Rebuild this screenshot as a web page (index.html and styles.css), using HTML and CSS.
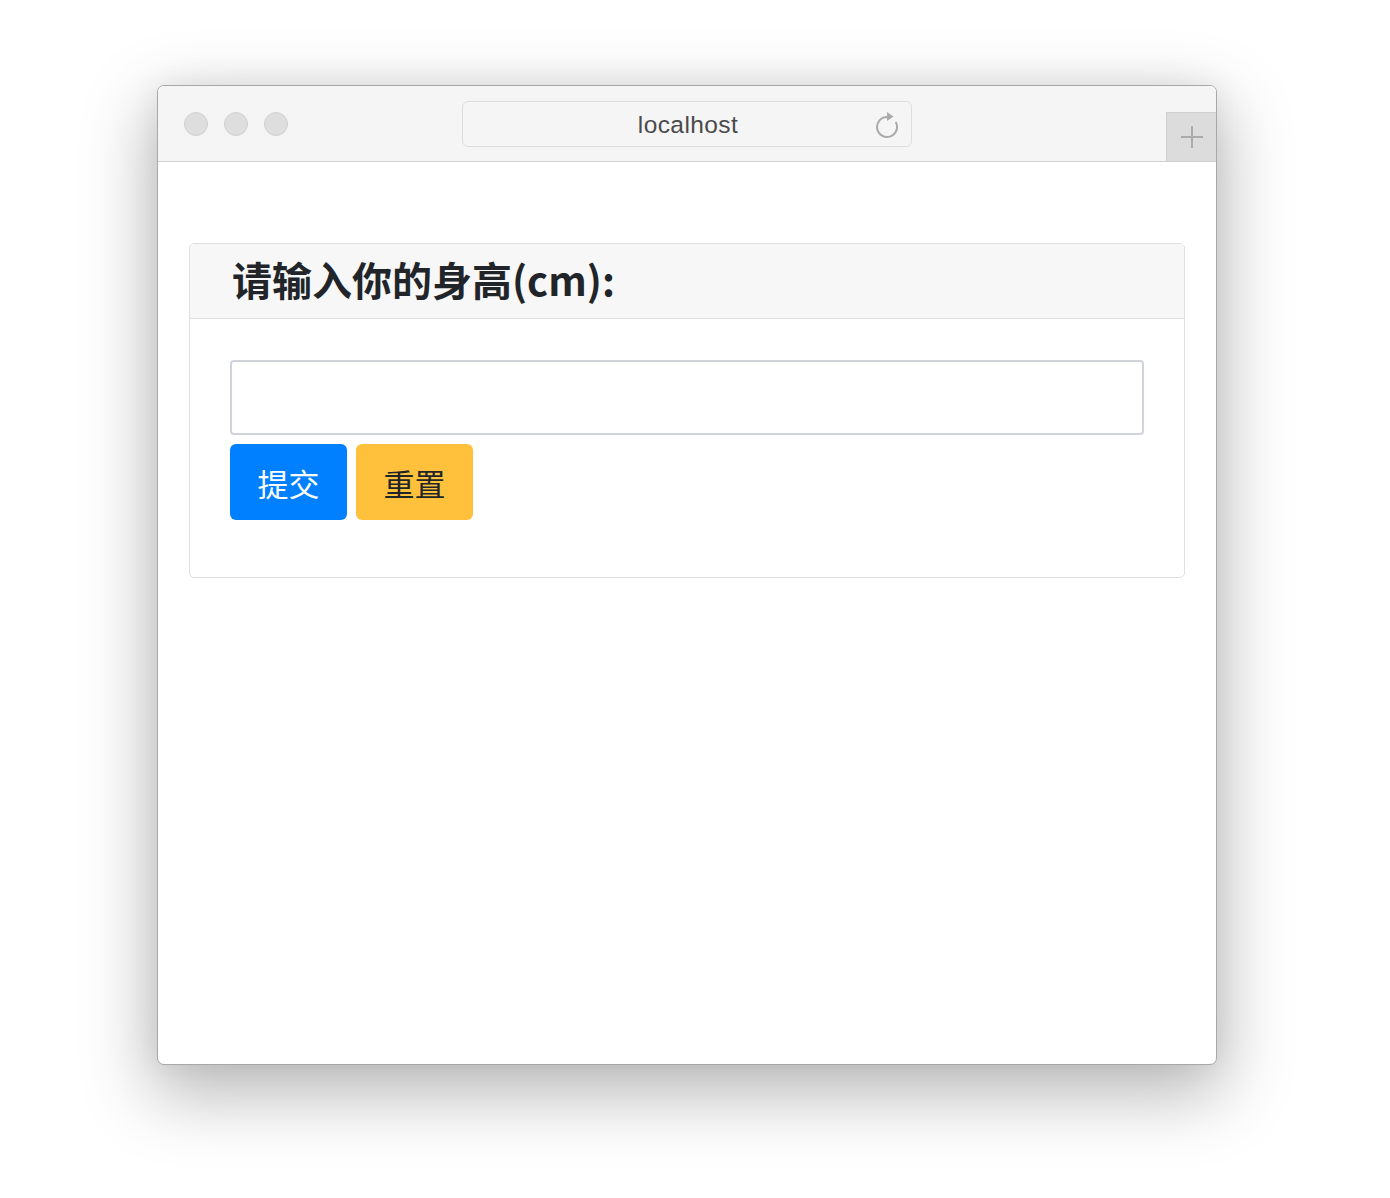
FILE: index.html
```html
<!DOCTYPE html>
<html lang="zh-CN">
<head>
<meta charset="utf-8">
<title>localhost</title>
<link rel="stylesheet" href="styles.css">
</head>
<body>
<div class="window">
  <div class="titlebar">
    <div class="lights">
      <span class="light"></span>
      <span class="light"></span>
      <span class="light"></span>
    </div>
    <div class="address">
      <span class="url">localhost</span>
      <svg class="reload" width="26" height="28" viewBox="0 0 26 28" aria-hidden="true">
        <path d="M13 6 A10 10 0 1 0 21.7 11" fill="none" stroke="#aaaaaa" stroke-width="2"/>
        <polygon points="13,1 19.5,5.5 13,10" fill="#aaaaaa"/>
      </svg>
    </div>
    <div class="newtab">
      <svg width="24" height="24" viewBox="0 0 24 24" aria-hidden="true">
        <path d="M12 1 V23 M1 12 H23" stroke="#aaaaaa" stroke-width="2"/>
      </svg>
    </div>
  </div>
  <div class="content">
    <div class="card">
      <div class="card-header">
        <h2 class="card-title">请输入你的身高(cm):</h2>
      </div>
      <div class="card-body">
        <form class="form">
          <input class="input" type="text">
          <div class="actions">
            <button type="button" class="btn btn-primary">提交</button>
            <button type="reset" class="btn btn-warning">重置</button>
          </div>
        </form>
      </div>
    </div>
  </div>
</div>
</body>
</html>
```
FILE: styles.css
```css
html, body {
  margin: 0;
  padding: 0;
  background: #ffffff;
}
body {
  min-height: 1198px;
  box-sizing: border-box;
  padding: 85px 0 0 157px;
  font-family: "Noto Sans CJK SC", "Noto Sans", sans-serif;
  color: #212529;
}
.window {
  width: 1060px;
  height: 980px;
  box-sizing: border-box;
  border: 1px solid #a8a8a8;
  border-radius: 7px;
  overflow: hidden;
  background: #ffffff;
  box-shadow: 0 24px 70px 6px rgba(0, 0, 0, 0.28), 0 0 30px rgba(0, 0, 0, 0.06);
  display: flex;
  flex-direction: column;
}
.titlebar {
  height: 75px;
  background: #f5f5f5;
  border-bottom: 1px solid #cfcfcf;
  display: grid;
  grid-template-columns: 1fr auto 1fr;
  align-items: center;
}
.lights {
  display: flex;
  gap: 16px;
  padding-left: 26px;
}
.light {
  width: 24px;
  height: 24px;
  box-sizing: border-box;
  border-radius: 50%;
  background: #dedede;
  border: 1px solid #d2d2d2;
}
.address {
  width: 450px;
  height: 46px;
  box-sizing: border-box;
  border: 1px solid #dedede;
  border-radius: 6px;
  background: #f5f5f5;
  display: flex;
  align-items: center;
  justify-content: center;
  position: relative;
}
.url {
  font-family: "Liberation Sans", Arial, sans-serif;
  font-size: 24.5px;
  letter-spacing: 0.4px;
  color: #4a4a4a;
  margin-left: 2px;
  margin-top: 3px;
}
.reload {
  position: absolute;
  right: 11px;
  top: 9px;
}
.newtab {
  justify-self: end;
  align-self: end;
  width: 50px;
  height: 49px;
  box-sizing: border-box;
  background: #dcdcdc;
  border-left: 1px solid #d0d0d0;
  border-top: 1px solid #d0d0d0;
  display: flex;
  align-items: center;
  justify-content: center;
}
.content {
  flex: 1;
  padding: 81px 31px 0 31px;
}
.card {
  border: 1px solid #dfdfdf;
  border-radius: 5px;
  overflow: hidden;
}
.card-header {
  background: #f7f7f7;
  border-bottom: 1px solid #dfdfdf;
  padding: 13px 42px;
}
.card-title {
  margin: 0;
  font-size: 40px;
  line-height: 48px;
  font-weight: 700;
  color: #212529;
  position: relative;
  top: -2px;
}
.card-body {
  padding: 41px 40px 40px 40px;
}
.form {
  margin: 0 0 17px 0;
}
.input {
  display: block;
  width: 100%;
  height: 75px;
  box-sizing: border-box;
  border: 2px solid #d0d4da;
  border-radius: 4px;
  background: #ffffff;
  margin: 0;
}
.actions {
  display: flex;
  gap: 9px;
  margin-top: 9px;
}
.btn {
  width: 117px;
  height: 76px;
  border: none;
  border-radius: 6px;
  font-family: "Noto Sans CJK SC", "Noto Sans", sans-serif;
  font-size: 31px;
  padding: 0;
  cursor: pointer;
}
.btn-primary {
  background: #0080ff;
  color: #ffffff;
}
.btn-warning {
  background: #ffc13c;
  color: #212529;
}
```
